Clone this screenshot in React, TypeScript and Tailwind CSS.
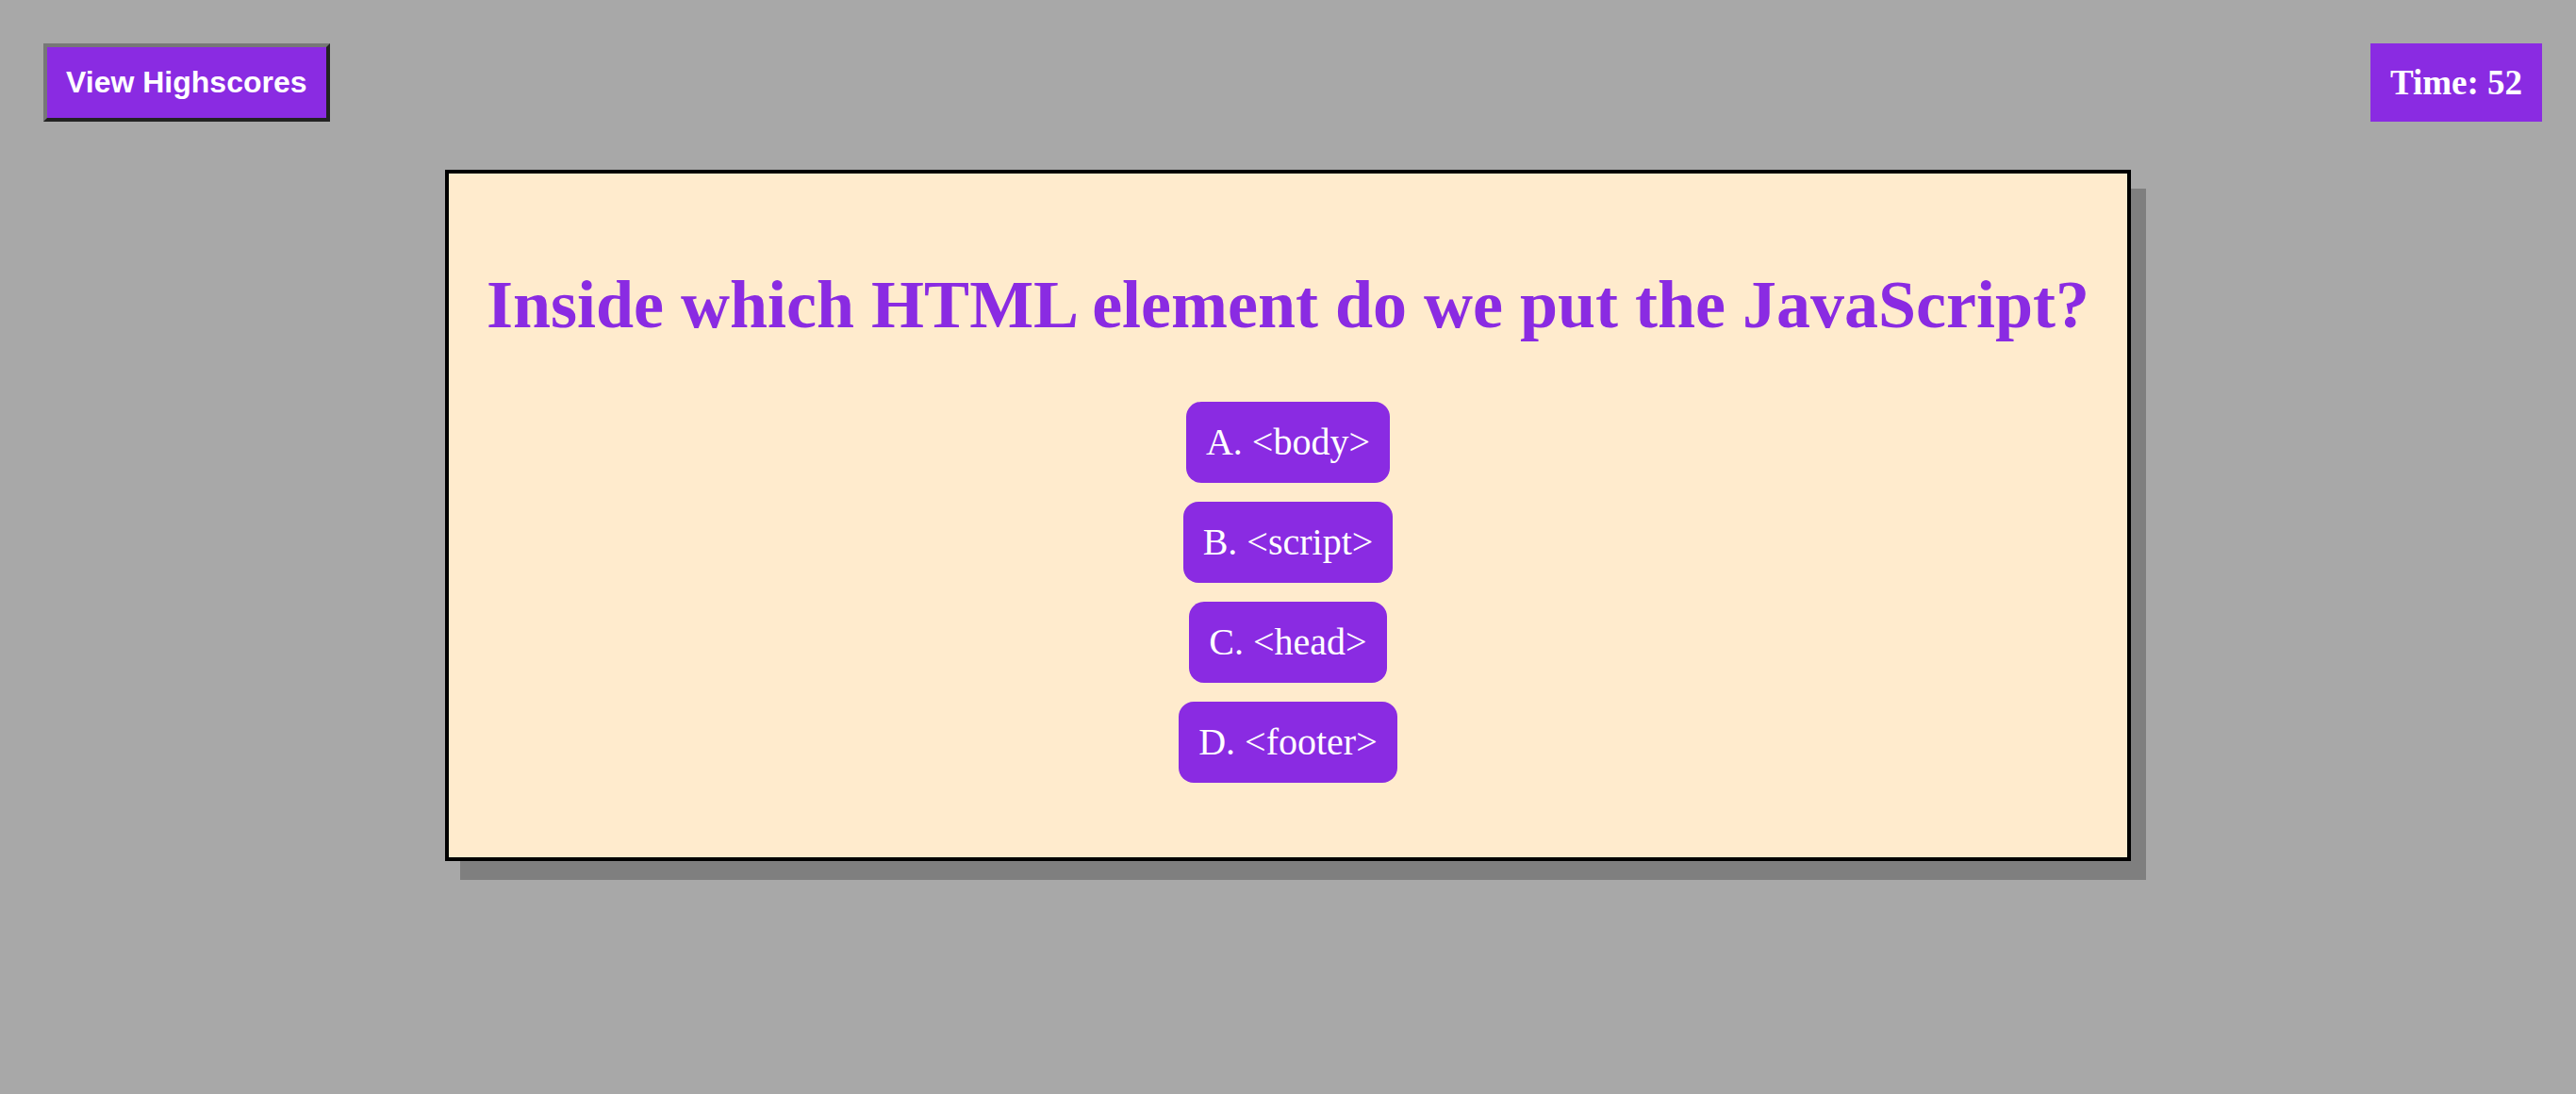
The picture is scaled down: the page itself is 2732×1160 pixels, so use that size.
import React from 'react';

const answers = ['A. <body>', 'B. <script>', 'C. <head>', 'D. <footer>'];

// --- Header ---
const Header: React.FC = () => (
  <header className="flex items-start justify-between pl-[46px] pr-[36px] pt-[46px]">
    <button className="border-4 border-t-[#777777] border-l-[#777777] border-b-[#222222] border-r-[#222222] bg-[#8a2be2] px-5 py-[19px] font-['Liberation_Sans',Arial,sans-serif] text-[32px] font-bold leading-[37px] text-white">
      View Highscores
    </button>
    <div className="flex h-[83px] w-[182px] items-center justify-center bg-[#8a2be2] font-['Liberation_Serif','Times_New_Roman',serif] text-[37px] font-bold leading-[44px] text-white">
      Time: 52
    </div>
  </header>
);

// --- Question Card ---
const QuestionCard: React.FC = () => (
  <section className="mx-auto mt-[51px] flex w-[1788px] flex-col items-center border-4 border-black bg-[#ffebcd] pb-[79px] pt-[99px] shadow-[16px_20px_0_#7f7f7f]">
    <h1 className="font-['Liberation_Serif','Times_New_Roman',serif] text-[72px] font-bold leading-[80px] text-[#8a2be2]">
      Inside which HTML element do we put the JavaScript?
    </h1>
    <div className="mt-[63px] flex flex-col items-center gap-5">
      {answers.map(a => (
        <button
          key={a}
          className="rounded-2xl bg-[#8a2be2] px-[21px] py-5 font-['Liberation_Serif','Times_New_Roman',serif] text-[40px] leading-[46px] text-white"
        >
          {a}
        </button>
      ))}
    </div>
  </section>
);

export default function App() {
  return (
    <div className="min-h-[1160px] bg-[#a8a8a8]">
      <Header />
      <QuestionCard />
    </div>
  );
}
